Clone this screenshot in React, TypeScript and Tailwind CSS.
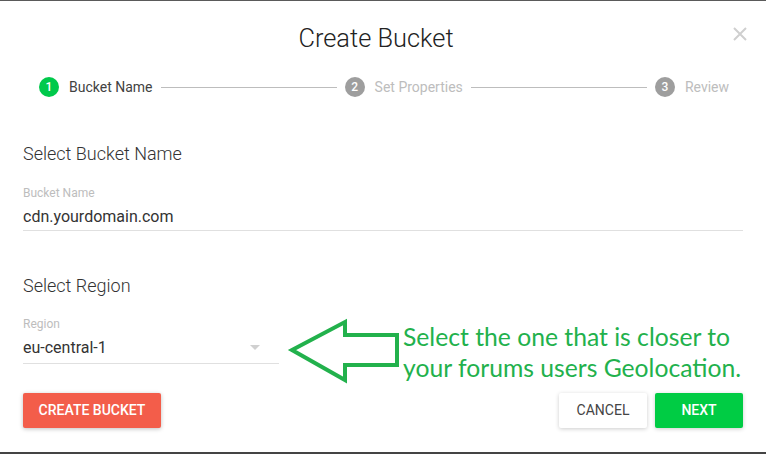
import React from 'react';

const steps = [
    { n: 1, label: 'Bucket Name', active: true },
    { n: 2, label: 'Set Properties', active: false },
    { n: 3, label: 'Review', active: false },
];

function Step({ n, label, active }: { n: number; label: string; active: boolean }) {
    return (
        <div className="flex items-center gap-[10px] shrink-0">
            <span
                className={`w-5 h-5 rounded-full flex items-center justify-center text-[12px] font-medium text-white ${active ? 'bg-[#00c94b]' : 'bg-[#9e9e9e]'}`}
            >
                {n}
            </span>
            <span className={`text-[14px] leading-5 ${active ? 'text-[#424242]' : 'text-[#bdbdbd]'}`}>{label}</span>
        </div>
    );
}

export default function App() {
    return (
        <div
            className="relative w-[766px] h-[454px] bg-white border-t border-b-2 border-t-[#5a5a5a] border-b-[#444] overflow-hidden"
            style={{ fontFamily: 'Roboto, "Liberation Sans", sans-serif' }}
        >
            {/* active tab marker on the top edge */}
            <div className="absolute -top-px left-[233px] w-[59px] h-px bg-[#1e6b34]" />

            {/* Header */}
            <div className="relative pt-[21px] pr-[14px]">
                <h1 className="text-center text-[25.4px] leading-8 font-light text-[#222]">Create Bucket</h1>
                <button className="absolute top-[26px] right-[19px] text-[#cfcfcf]">
                    <svg width="14" height="14" viewBox="0 0 14 14" fill="none" stroke="currentColor" strokeWidth="2">
                        <path d="M1 1l12 12M13 1L1 13" />
                    </svg>
                </button>
            </div>

            {/* Stepper */}
            <div className="mt-[23px] pl-[39px] pr-[37px] flex items-center h-5">
                {steps.map((s, i) => (
                    <React.Fragment key={s.n}>
                        <Step {...s} />
                        {i < steps.length - 1 && <div className="flex-1 h-px bg-[#bdbdbd] mx-2" />}
                    </React.Fragment>
                ))}
            </div>

            {/* Form */}
            <div className="px-[23px]">
                <h2 className="mt-[45px] text-[18px] leading-6 font-light text-[#333]">Select Bucket Name</h2>
                <div className="mt-[19px]">
                    <label className="block text-[12px] leading-4 text-[#bdbdbd]">Bucket Name</label>
                    <div className="mt-1 pb-px border-b border-[#e0e0e0] text-[16px] leading-6 text-[#333]">
                        cdn.yourdomain.com
                    </div>
                </div>

                <h2 className="mt-[43px] text-[18px] leading-6 font-light text-[#333]">Select Region</h2>
                <div className="mt-[18px] w-[256px]">
                    <label className="block text-[12px] leading-4 text-[#bdbdbd]">Region</label>
                    <div className="mt-1 pb-[3px] border-b border-[#e0e0e0] flex items-center justify-between text-[16px] leading-6 text-[#333]">
                        <span>eu-central-1</span>
                        <svg width="10" height="5" viewBox="0 0 10 5" className="mr-[19px] -mt-[2px]">
                            <path d="M0 0h10L5 5z" fill="#d0d0d0" />
                        </svg>
                    </div>
                </div>

                <div className="mt-[29px] flex items-center">
                    <button className="h-[35px] w-[138px] rounded-[2px] bg-[#f35d4a] text-white text-[14px] font-medium shadow-[0_1px_4px_rgba(0,0,0,0.25)]">
                        CREATE BUCKET
                    </button>
                    <div className="ml-auto flex gap-2">
                        <button className="h-[35px] w-[88px] rounded-[2px] bg-white text-[#444] text-[14px] shadow-[0_1px_4px_rgba(0,0,0,0.2)]">
                            CANCEL
                        </button>
                        <button className="h-[35px] w-[88px] rounded-[2px] bg-[#00cc44] text-white text-[14px] font-medium shadow-[0_1px_4px_rgba(0,0,0,0.2)]">
                            NEXT
                        </button>
                    </div>
                </div>
            </div>

            {/* Annotation overlay */}
            <svg className="absolute left-0 top-0 pointer-events-none" width="766" height="454">
                <polygon
                    points="292,349 345,321 345,334 397,334 397,364 345,364 345,379"
                    fill="none"
                    stroke="#22b14c"
                    strokeWidth="4"
                    strokeLinejoin="miter"
                />
            </svg>
            <p
                className="absolute left-[403px] top-[320px] text-[#22b14c] text-[24.7px] leading-[31px]"
                style={{ fontFamily: 'Lato, "Open Sans", sans-serif' }}
            >
                Select the one that is closer to
                <br />
                your forums users Geolocation.
            </p>
        </div>
    );
}
